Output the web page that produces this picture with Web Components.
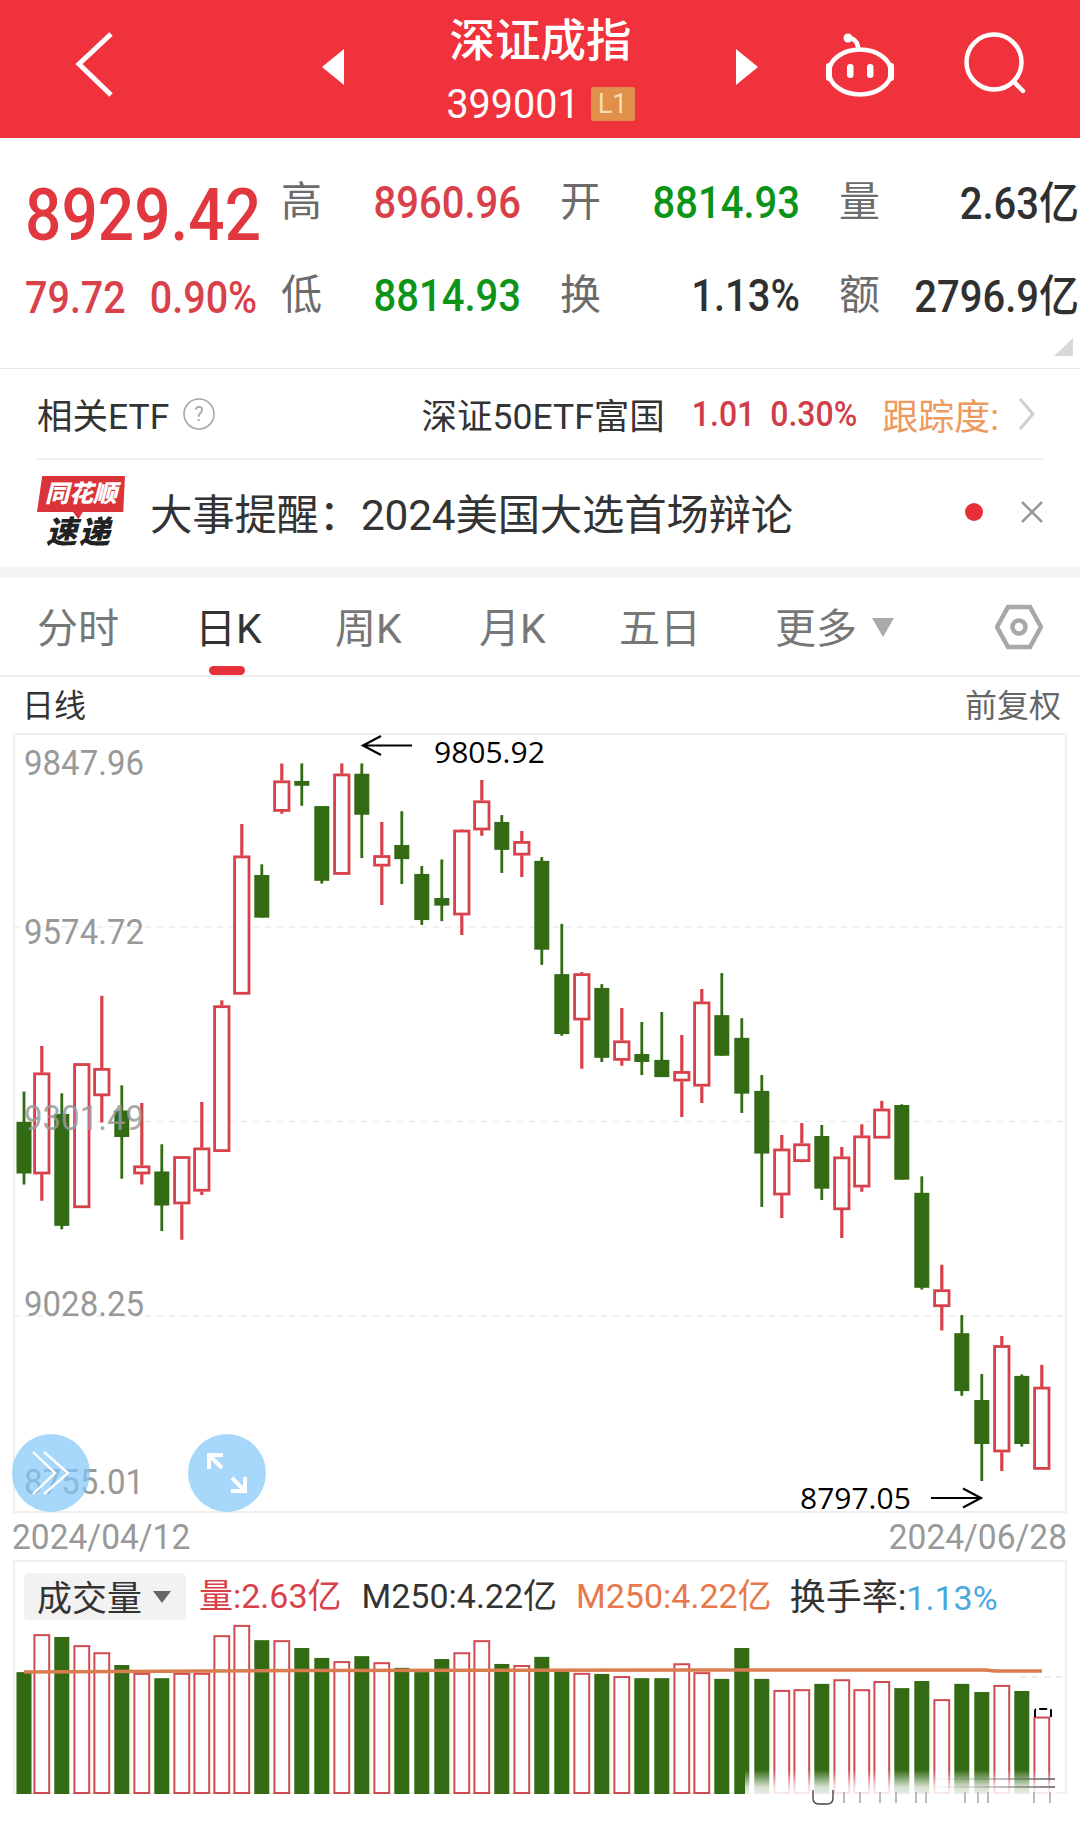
<!DOCTYPE html>
<html lang="zh">
<head>
<meta charset="utf-8">
<title>深证成指</title>
<style>
	html, body { margin: 0; background: #fff; }
	body { width: 1080px; height: 1827px; overflow: hidden; font-family: Roboto, "Noto Sans CJK SC", sans-serif; }
</style>
</head>
<body>
<stock-header></stock-header>
<quote-panel></quote-panel>
<etf-row></etf-row>
<news-row></news-row>
<period-tabs></period-tabs>
<kline-chart></kline-chart>
<volume-chart></volume-chart>

<script>
const RED = '#d8404a', GREEN = '#336b14';

// numbers in the reference are tall and narrow
class NumText extends HTMLElement {
	constructor(){
		super();
		this.attachShadow({ mode: 'open' });
		this.shadowRoot.innerHTML = `<style>
			:host { display: inline-block; transform: scaleY(var(--tall, 1.12)); white-space: nowrap; }
		</style><slot></slot>`;
	}
}
customElements.define('num-text', NumText);

class StockHeader extends HTMLElement {
	constructor(){
		super();
		this.attachShadow({ mode: 'open' });
		this.shadowRoot.innerHTML = `<style>
			:host { display: flex; box-sizing: border-box; height: 138px; padding-bottom: 10px; background: #f0323c; color: #fff; align-items: center; }
			svg { display: block; flex: none; }
			.back { margin-left: 74px; }
			.prev { margin-left: 205px; margin-top: 6px; }
			.next { margin-left: -1px; margin-top: 6px; }
			.mid { width: 391px; margin-top: -6px; display: flex; flex-direction: column; align-items: center; }
			.title { font-size: 45.5px; line-height: 45px; font-weight: 500; margin-top: 17px; }
			.code { display: flex; align-items: center; margin-top: 23px; height: 34px; }
			.code num-text { font-size: 39.5px; line-height: 34px; --tall: 1.05; }
			.lv { width: 44px; height: 34px; margin-left: 11px; background: #e0904a; color: #f8dcb4; border-radius: 2px; font-size: 27px; line-height: 34px; text-align: center; }
			.bot { margin-left: 65px; }
			.find { margin-left: 68px; }
		</style>
		<svg class="back" width="42" height="66" viewBox="0 0 42 66" fill="none" stroke="#fff" stroke-width="5"><path d="M37 3 5 33l32 31"/></svg>
		<svg class="prev" width="24" height="38" viewBox="0 0 24 38" fill="#fff"><path d="M23 1v36L1 19z"/></svg>
		<div class="mid">
			<div class="title">深证成指</div>
			<div class="code"><num-text>399001</num-text><div class="lv">L1</div></div>
		</div>
		<svg class="next" width="24" height="38" viewBox="0 0 24 38" fill="#fff"><path d="M1 1v36l22-18z"/></svg>
		<svg class="bot" width="72" height="66" viewBox="0 0 72 66" fill="none" stroke="#fff" stroke-width="4.5" stroke-linecap="round">
			<path d="M24 7c5 0 9 2 10 9"/>
			<circle cx="24" cy="7" r="4.5" fill="#fff" stroke="none"/>
			<ellipse cx="36" cy="41" rx="31" ry="22.5"/>
			<path d="M5 35v12M67 35v12" stroke-width="6"/>
			<rect x="23" y="33" width="6.5" height="14" rx="3.2" fill="#fff" stroke="none"/>
			<rect x="43" y="33" width="6.5" height="14" rx="3.2" fill="#fff" stroke="none"/>
		</svg>
		<svg class="find" width="64" height="64" viewBox="0 0 64 64" fill="none" stroke="#fff" stroke-width="4.5" stroke-linecap="round">
			<circle cx="30" cy="30" r="27.5"/><path d="M50 50l9 9"/>
		</svg>`;
	}
}
customElements.define('stock-header', StockHeader);

class QuotePanel extends HTMLElement {
	constructor(){
		super();
		this.attachShadow({ mode: 'open' });
		this.shadowRoot.innerHTML = `<style>
			:host { display: grid; position: relative; box-sizing: border-box; height: 231px; padding: 18px 0 0 25px; border-bottom: 1px solid #e8e8e8;
				grid-template-columns: 256px 41px 199px 80px 199px 80px 199px; grid-auto-rows: 93px; align-items: center; font-size: 40px; font-weight: 500; }
			.l { color: #6b6b6b; justify-self: end; line-height: 41px; font-size: 41px; font-weight: 400; }
			.v { justify-self: end; }
			.r { color: #d8404a; } .g { color: #0c9418; } .k { color: #303030; }
			.yi { margin-top: -6px; }
			.price { font-size: 64px; font-weight: 500; color: #e0383e; margin-top: 26px; }
			.chg { display: flex; gap: 24px; font-size: 39.5px; color: #d8404a; margin-top: 4px; }
			.corner { position: absolute; right: 7px; bottom: 12px; width: 19px; height: 18px; background: #d8d8d8; clip-path: polygon(100% 0, 100% 100%, 0 100%); }
		</style>
		<div class="price"><num-text>8929.42</num-text></div>
		<div class="l">高</div><div class="v r"><num-text>8960.96</num-text></div>
		<div class="l">开</div><div class="v g"><num-text>8814.93</num-text></div>
		<div class="l">量</div><div class="v k yi"><num-text>2.63亿</num-text></div>
		<div class="chg"><num-text>79.72</num-text><num-text>0.90%</num-text></div>
		<div class="l">低</div><div class="v g"><num-text>8814.93</num-text></div>
		<div class="l">换</div><div class="v k"><num-text>1.13%</num-text></div>
		<div class="l">额</div><div class="v k yi"><num-text>2796.9亿</num-text></div>
		<div class="corner"></div>`;
	}
}
customElements.define('quote-panel', QuotePanel);

class EtfRow extends HTMLElement {
	constructor(){
		super();
		this.attachShadow({ mode: 'open' });
		this.shadowRoot.innerHTML = `<style>
			:host { display: flex; box-sizing: border-box; height: 91px; margin: 0 37px 0 37px; align-items: center; border-bottom: 2px solid #f1f1f1; font-size: 35.5px; color: #333; }
			svg { flex: none; display: block; }
			.q { margin-left: 14px; }
			.name { margin-left: auto; }
			.val { margin-left: 27px; color: #d03c48; font-size: 32px; font-weight: 500; display: flex; gap: 15px; }
			.track { margin-left: 25px; color: #ee9a5c; font-size: 36px; }
			.go { margin-left: 19px; margin-right: 7px; }
		</style>
		<span>相关ETF</span>
		<svg class="q" width="32" height="32" viewBox="0 0 32 32"><circle cx="16" cy="16" r="15" fill="none" stroke="#a8a8a8" stroke-width="1.6"/><text x="16" y="23" text-anchor="middle" font-size="20" fill="#a8a8a8" font-family="Roboto">?</text></svg>
		<span class="name">深证50ETF富国</span>
		<span class="val"><num-text>1.01</num-text><num-text>0.30%</num-text></span>
		<span class="track">跟踪度:</span>
		<svg class="go" width="18" height="32" viewBox="0 0 18 32" fill="none" stroke="#cfcfcf" stroke-width="3"><path d="M2 1l13 15L2 31"/></svg>`;
	}
}
customElements.define('etf-row', EtfRow);

class NewsRow extends HTMLElement {
	constructor(){
		super();
		this.attachShadow({ mode: 'open' });
		this.shadowRoot.innerHTML = `<style>
			:host { display: flex; box-sizing: border-box; height: 118px; padding: 0 37px 4px 37px; align-items: center; border-bottom: 11px solid #f5f5f5; color: #333; }
			.logo { width: 88px; flex: none; display: flex; flex-direction: column; align-items: center; font-weight: 900; font-style: italic; }
			.tag { width: 88px; height: 44px; background: #da3338; color: #fff; font-size: 24px; line-height: 37px; text-align: center;
				clip-path: polygon(6% 0, 100% 0, 98% 83%, 52% 83%, 47% 100%, 41% 83%, 0 83%); }
			.speed { font-size: 31px; line-height: 30px; color: #222; letter-spacing: 2px; margin-top: -2px; margin-left: -4px; }
			.txt { margin-left: 25px; font-size: 42.4px; white-space: nowrap; letter-spacing: -.2px; }
			.dot { margin-left: auto; width: 18px; height: 18px; border-radius: 50%; background: #e8303a; flex: none; }
			svg { margin-left: 38px; display: block; flex: none; }
		</style>
		<div class="logo"><div class="tag">同花顺</div><div class="speed">速递</div></div>
		<div class="txt">大事提醒：2024美国大选首场辩论</div>
		<div class="dot"></div>
		<svg width="22" height="22" viewBox="0 0 22 22" stroke="#999" stroke-width="2.6"><path d="M1 1l20 20M21 1 1 21"/></svg>`;
	}
}
customElements.define('news-row', NewsRow);

class KTab extends HTMLElement {
	constructor(){
		super();
		this.attachShadow({ mode: 'open' });
		this.shadowRoot.innerHTML = `<style>
			:host { display: block; position: relative; color: #777; font-size: 41px; line-height: 103px; height: 97px; white-space: nowrap; }
			:host([active]) { color: #333; }
			:host([active])::after { content: ""; position: absolute; left: 14px; bottom: 0; width: 36px; height: 9px; border-radius: 5px; background: #e8303a; }
		</style><slot></slot>`;
	}
}
customElements.define('k-tab', KTab);

class PeriodTabs extends HTMLElement {
	constructor(){
		super();
		this.attachShadow({ mode: 'open' });
		this.shadowRoot.innerHTML = `<style>
			:host { display: grid; box-sizing: border-box; height: 99px; padding-left: 37px; border-bottom: 2px solid #ececec; grid-template-columns: 158px 140px 144px 140px 156px 96px 124px 48px; align-items: center; }
			svg { display: block; }
			.hex { grid-column: 8; }
		</style>
		<k-tab>分时</k-tab><k-tab active>日K</k-tab><k-tab>周K</k-tab><k-tab>月K</k-tab><k-tab>五日</k-tab><k-tab>更多</k-tab>
		<svg width="24" height="20" viewBox="0 0 24 20" fill="#aaa"><path d="M1 1h22L12 20z"/></svg>
		<svg class="hex" width="48" height="46" viewBox="0 0 48 46" fill="none" stroke="#a8a8a8" stroke-width="4.5"><path d="M13 3h22l11 20-11 20H13L2 23z"/><circle cx="24" cy="23" r="6.5"/></svg>`;
	}
}
customElements.define('period-tabs', PeriodTabs);

// zoom crop units -> page y
const zy = v => 730 + v / 2.904;
// [type, wick top, body top, body bottom, wick bottom]
const zoomCandles = [
	['g',1050,1138,1288,1320],['r',918,995,1290,1367],['g',1055,1115,1440,1450],['r',968,968,1388,1388],
	['r',772,982,1063,1140],['g',1032,1105,1182,1303],['r',1083,1265,1290,1320],['g',1203,1282,1381,1455],
	['r',1237,1238,1377,1480],['r',1080,1213,1340,1350],['r',785,800,1225,1225],['r',273,365,768,768],
	['g',390,421,545,545],['r',97,147,237,243],['g',97,148,162,220],['g',221,221,438,446],
	['r',97,127,420,420],['g',97,127,246,372],['r',267,364,396,508],['g',236,334,375,447],
	['g',395,418,552,566],['g',376,488,510,555],['r',288,290,538,595],['r',145,205,291,307],
	['g',247,267,348,415],['r',293,323,364,427],['g',369,380,638,682],['g',563,709,883,888],
	['r',703,707,843,984],['g',738,749,952,964],['r',807,902,960,975],['g',848,941,964,1002],
	['g',819,958,1008,1008],['r',886,991,1020,1124],['r',752,789,1035,1083],['g',706,828,946,946],
	['g',837,894,1056,1112],['g',1002,1048,1230,1385],['r',1176,1216,1351,1417],['r',1141,1201,1254,1255],
	['g',1147,1179,1332,1365],['r',1211,1239,1394,1475],['r',1145,1178,1328,1341],['r',1077,1100,1186,1186],
	['g',1087,1089,1306,1306]
];
const candles = zoomCandles.map(c => [c[0], zy(c[1]), zy(c[2]), zy(c[3]), zy(c[4])]).concat([
	['g',1176.3,1192.8,1287.8,1289.5],['r',1264.8,1289.5,1306.9,1330.4],['g',1315.1,1333.2,1391.1,1395.8],
	['g',1374.1,1400,1444,1481],['r',1336,1345.3,1452.2,1471],['g',1374.4,1375.9,1444,1446.6],
	['r',1364.8,1386.9,1469.6,1469.6]
]);
const centerX = i => i === 0 ? 24 : 41.8 + 20 * (i - 1);

function candleSvg(){
	return candles.map((c, i) => {
		const x = centerX(i), [t, wt, bt, bb, wb] = c;
		if (t === 'g') {
			return `<rect x="${x-1.4}" y="${wt}" width="2.8" height="${wb-wt}" fill="${GREEN}"/><rect x="${x-7.5}" y="${bt}" width="15" height="${bb-bt}" fill="${GREEN}"/>`;
		}
		return `<path d="M${x} ${wt}V${bt}M${x} ${bb}V${wb}" stroke="${RED}" stroke-width="3.2"/><rect x="${x-7.2}" y="${bt+1.2}" width="14.4" height="${bb-bt-2.4}" fill="#fff" stroke="${RED}" stroke-width="2.8"/>`;
	}).join('');
}

class KlineChart extends HTMLElement {
	constructor(){
		super();
		this.attachShadow({ mode: 'open' });
		const labels = [['9847.96',750],['9574.72',919],['9301.49',1105],['9028.25',1291],['8755.01',1469]];
		this.shadowRoot.innerHTML = `<style>
			:host { display: block; }
			.cap { display: flex; justify-content: space-between; align-items: center; box-sizing: border-box; height: 56px; padding: 0 19px 5px 22px; color: #333; }
			.cap span:first-child { font-size: 32px; }
			.cap span:last-child { font-size: 32px; color: #666; }
			.frame { position: relative; box-sizing: border-box; width: 1054px; height: 780px; margin-left: 13px; border: 2px solid #eee; }
			svg.plot { position: absolute; left: -2px; top: -2px; display: block; }
			.y { position: absolute; left: 9px; font-size: 33px; line-height: 26px; height: 26px; color: #999; --tall: 1.08; }
			.y.over { opacity: .85; }
			.hi, .lo { position: absolute; font-family: "Open Sans", sans-serif; font-size: 30px; line-height: 24px; color: #000; }
			.hi { left: 419px; top: 5px; }
			.lo { left: 785px; top: 751px; }
			.ball { position: absolute; top: 699px; width: 78px; height: 78px; border-radius: 50%; background: rgba(130,200,250,.7); display: flex; align-items: center; justify-content: center; }
			.ball.a { left: -3px; } .ball.b { left: 173px; }
			.dates { display: flex; justify-content: space-between; align-items: center; height: 47px; padding: 0 13px 0 12px; font-size: 33.5px; color: #999; --tall: 1.06; }
		</style>
		<div class="cap"><span>日线</span><span>前复权</span></div>
		<div class="frame">
			<svg class="plot" width="1054" height="780" viewBox="13 733 1054 780">
				<path d="M13 927H1067M13 1121.5H1067M13 1316H1067" stroke="#ececec" stroke-width="1.5" stroke-dasharray="6 6"/>
				${candleSvg()}
				<path d="M412 745.5H363M381 736l-18 9.5 18 9.5" fill="none" stroke="#000" stroke-width="2.2"/>
				<path d="M931 1498h50M963 1488.5l18 9.5-18 9.5" fill="none" stroke="#000" stroke-width="2.2"/>
			</svg>
			${labels.map(l => `<div class="y${l[0]==='9301.49'?' over':''}" style="top:${l[1]-735}px"><num-text>${l[0]}</num-text></div>`).join('')}
			<div class="hi">9805.92</div>
			<div class="lo">8797.05</div>
			<div class="ball a"><svg width="40" height="44" viewBox="0 0 40 44" fill="none" stroke="#fff" stroke-width="2.4"><path d="M2 1l22 21L2 43M13 1l24 21-24 21"/></svg></div>
			<div class="ball b"><svg width="42" height="42" viewBox="0 0 42 42" fill="none" stroke="#fff" stroke-width="4"><path d="M3 17V3h14M3 3l13 13M39 25v14H25M39 39 26 26"/></svg></div>
		</div>
		<div class="dates"><num-text>2024/04/12</num-text><num-text>2024/06/28</num-text></div>`;
	}
}
customElements.define('kline-chart', KlineChart);

const volTops = [1132,1025,1033,1056,1076,1112,1134,1149,1134,1134,1028,999,1042,1042,1064,1092,1101,1087,1104,1120,1132,1095,1076,1042,1109,1112,1089,
	1130,1134,1137,1143,1149,1149,1107,1132,1151,1064,1151,1182,1180,1165,1152,1180,1157,1177,1157,1208,1165,1188,1168,1185,1257];
const vy = v => 1270 + v / 2.815;

function volumeSvg(){
	const bottom = 1794;
	const bars = candles.map((c, i) => {
		const x = centerX(i), top = vy(volTops[i]);
		if (c[0] === 'g') return `<rect x="${x-7.5}" y="${top}" width="15" height="${bottom-top}" fill="${GREEN}"/>`;
		return `<rect x="${x-7.4}" y="${top+1}" width="14.8" height="${bottom-top-2}" fill="#fff" stroke="#d04a50" stroke-width="2"/>`;
	}).join('');
	const stubs = [844,860,880,896,916,926,965,978,988,1034,1050].map(x => `<path d="M${x} 1792V1803" stroke="#bbb" stroke-width="2"/>`).join('');
	return `<defs><linearGradient id="fade" x1="0" y1="0" x2="0" y2="1">
			<stop offset="0" stop-color="#fff" stop-opacity="0"/><stop offset=".5" stop-color="#fff" stop-opacity=".8"/><stop offset="1" stop-color="#fff"/>
		</linearGradient>
		<linearGradient id="smear" gradientUnits="userSpaceOnUse" x1="930" y1="0" x2="1055" y2="0">
			<stop offset="0" stop-color="#888" stop-opacity="0"/><stop offset="1" stop-color="#555"/>
		</linearGradient></defs>
		<path d="M1020 1677H1067" stroke="#e8e8e8" stroke-width="1.5" stroke-dasharray="6 6"/>
		${bars}
		<path d="M24 1672 L300 1670.5 L700 1670 L985 1670 L995 1671 L1042 1671" fill="none" stroke="#d97c4e" stroke-width="3.5"/>
		<path d="M1035 1717v-6q0-2 2-2h12q2 0 2 2v6" fill="none" stroke="#000" stroke-width="2" stroke-dasharray="8 3"/>
		<rect x="745" y="1770" width="312" height="34" fill="url(#fade)"/>
		${stubs}
		<path d="M813 1790v8q0 6 6 6h8q6 0 6-6v-8" fill="none" stroke="#444" stroke-width="1.4"/>
		<path d="M930 1779H1055M930 1787H1055" stroke="url(#smear)" stroke-width="1.6"/>`;
}

class VolumeChart extends HTMLElement {
	constructor(){
		super();
		this.attachShadow({ mode: 'open' });
		this.shadowRoot.innerHTML = `<style>
			:host { display: block; box-sizing: border-box; width: 1054px; height: 234px; margin-left: 13px; border: 2px solid #eee; border-bottom-color: #f0f0f0; font-size: 34px; }
			.bar { display: flex; height: 47px; margin-top: 11px; padding-left: 9px; align-items: center; white-space: nowrap; }
			.bar span { margin-top: -6px; }
			.chip { display: flex; align-items: center; box-sizing: border-box; width: 162px; height: 47px; padding-left: 13px; background: #f2f2f2; border-radius: 5px; font-size: 35px; color: #333; flex: none; }
			.chip b { font-weight: 400; margin-top: -3px; }
			.chip svg { margin-left: 11px; display: block; }
			.a { margin-left: 13px; color: #d8404a; }
			.b { margin-left: 20px; color: #333; }
			.c { margin-left: 19px; color: #e8784c; }
			.d { margin-left: 18px; color: #333; font-size: 36px; }
			.d i { font-style: normal; font-size: 34px; color: #4aa8e0; }
			svg.plot { display: block; margin-left: -2px; margin-top: 2px; overflow: visible; }
		</style>
		<div class="bar">
			<div class="chip"><b>成交量</b><svg width="18" height="12" viewBox="0 0 18 12" fill="#666"><path d="M0 0h18L9 12z"/></svg></div>
			<span class="a">量:2.63亿</span><span class="b">M250:4.22亿</span><span class="c">M250:4.22亿</span><span class="d">换手率:<i>1.13%</i></span>
		</div>
		<svg class="plot" width="1054" height="190" viewBox="13 1622 1054 190">${volumeSvg()}</svg>`;
	}
}
customElements.define('volume-chart', VolumeChart);
</script>
</body>
</html>
